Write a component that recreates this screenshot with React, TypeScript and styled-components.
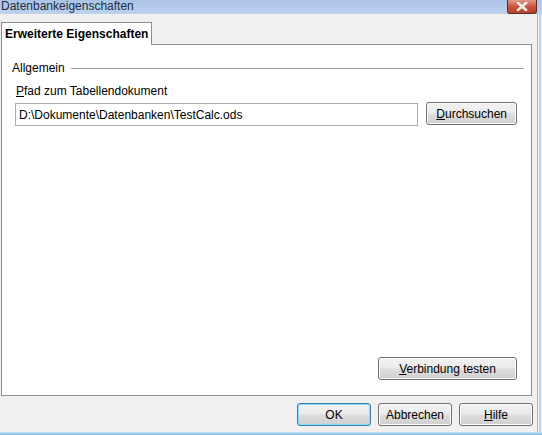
import React from "react";
import styled, { createGlobalStyle } from "styled-components";

const Global = createGlobalStyle`
  html, body { margin: 0; padding: 0; background: #f0eeef; }
  * { box-sizing: border-box; }
  body { font-family: "Liberation Sans", Arial, sans-serif; font-size: 12px; color: #000; }
`;

const Window = styled.div`
  width: 542px;
  height: 435px;
  display: flex;
  flex-direction: column;
  background: #f1eff0;
  overflow: hidden;
`;

const TitleBar = styled.div`
  height: 14px;
  flex: none;
  display: flex;
  align-items: flex-start;
  justify-content: space-between;
  background: linear-gradient(#aac4e8, #bcd2ee);
  padding-left: 1px;
`;

const TitleText = styled.span`
  font-size: 12px;
  line-height: 13px;
  color: #1e2a3a;
`;

const CloseButton = styled.div`
  width: 30px;
  height: 14px;
  margin-right: 5px;
  border: 1px solid #5a2a24;
  border-top: none;
  border-radius: 0 0 3px 3px;
  background: linear-gradient(#e0998a, #c9513b 55%, #b8432e);
  display: flex;
  align-items: center;
  justify-content: center;
`;

const Main = styled.div`
  flex: 1;
  display: flex;
  min-height: 0;
`;

const Body = styled.div`
  flex: 1;
  display: flex;
  flex-direction: column;
  padding: 8px 0 0 1px;
`;

const RightEdge = styled.div`
  width: 5px;
  flex: none;
  border-left: 1px solid #9fb8d0;
  background: linear-gradient(90deg, #f4f2f3 0 1px, #bcd6ee 1px 3px, #e8eef4 3px);
`;

const BottomEdge = styled.div`
  height: 3px;
  flex: none;
  background: linear-gradient(#d0e4f4, #6fb8e6);
`;

const TabStrip = styled.div`
  display: flex;
  height: 22px;
`;

const Tab = styled.div`
  position: relative;
  z-index: 1;
  width: 151px;
  height: 23px;
  background: #fff;
  border: 1px solid #8c8c8c;
  border-bottom: none;
  font-weight: bold;
  font-size: 12px;
  padding: 4px 0 0 3px;
  white-space: nowrap;
`;

const Panel = styled.div`
  width: 531px;
  height: 352px;
  background: #fff;
  border: 1px solid #8c8c8c;
  display: flex;
  flex-direction: column;
  padding: 16px 14px 15px 10px;
`;

const GroupHeader = styled.div`
  display: flex;
  align-items: center;
  gap: 6px;
  height: 14px;
  margin-right: -7px;
`;

const GroupLine = styled.div`
  flex: 1;
  height: 1px;
  background: #a3a3a3;
`;

const FieldLabel = styled.div`
  margin: 9px 0 0 4px;
  height: 14px;
  line-height: 14px;
`;

const FieldRow = styled.div`
  display: flex;
  align-items: flex-start;
  gap: 8px;
  margin: 4px 0 0 3px;
`;

const TextInput = styled.div`
  width: 405px;
  height: 23px;
  margin-top: 1px;
  border: 1px solid #a5acb5;
  background: #fff;
  padding: 4px 0 0 3px;
  line-height: 14px;
  white-space: nowrap;
`;

const Button = styled.div<{ $width: number; $default?: boolean }>`
  width: ${(p) => p.$width}px;
  height: 23px;
  border: 1px solid ${(p) => (p.$default ? "#3c7fb1" : "#707070")};
  border-radius: 3px;
  background: linear-gradient(#f2f2f2 0%, #ebebeb 45%, #dddddd 55%, #cfcfcf 100%);
  box-shadow: ${(p) => (p.$default ? "inset 0 0 0 1px #7ee0fb" : "inset 0 0 0 1px #fbfbfb")};
  display: flex;
  align-items: center;
  justify-content: center;
  line-height: 14px;
  white-space: nowrap;
`;

const Spacer = styled.div`
  flex: 1;
`;

const PanelActions = styled.div`
  display: flex;
  justify-content: flex-end;
`;

const Footer = styled.div`
  flex: 1;
  display: flex;
  justify-content: flex-end;
  align-items: flex-start;
  gap: 7px;
  padding: 7px 4px 0 0;
`;

const Key = styled.span`
  text-decoration: underline;
`;

export default function App() {
  return (
    <>
      <Global />
      <Window>
        <TitleBar>
          <TitleText>Datenbankeigenschaften</TitleText>
          <CloseButton>
            <svg width="12" height="9" viewBox="0 0 12 9">
              <path d="M2 1 L10 8 M10 1 L2 8" stroke="#fff" strokeWidth="2.4" strokeLinecap="square" />
              <path d="M2 1 L10 8 M10 1 L2 8" stroke="#e8e8e8" strokeWidth="1.2" />
            </svg>
          </CloseButton>
        </TitleBar>
        <Main>
          <Body>
            <TabStrip>
              <Tab>Erweiterte Eigenschaften</Tab>
            </TabStrip>
            <Panel>
              <GroupHeader>
                <span>Allgemein</span>
                <GroupLine />
              </GroupHeader>
              <FieldLabel>
                <Key>P</Key>fad zum Tabellendokument
              </FieldLabel>
              <FieldRow>
                <TextInput>D:\Dokumente\Datenbanken\TestCalc.ods</TextInput>
                <Button $width={91}>
                  <span>
                    <Key>D</Key>urchsuchen
                  </span>
                </Button>
              </FieldRow>
              <Spacer />
              <PanelActions>
                <Button $width={139}>
                  <span>
                    <Key>V</Key>erbindung testen
                  </span>
                </Button>
              </PanelActions>
            </Panel>
            <Footer>
              <Button $width={74} $default>
                OK
              </Button>
              <Button $width={74}>Abbrechen</Button>
              <Button $width={74}>
                <span>
                  <Key>H</Key>ilfe
                </span>
              </Button>
            </Footer>
          </Body>
          <RightEdge />
        </Main>
        <BottomEdge />
      </Window>
    </>
  );
}
